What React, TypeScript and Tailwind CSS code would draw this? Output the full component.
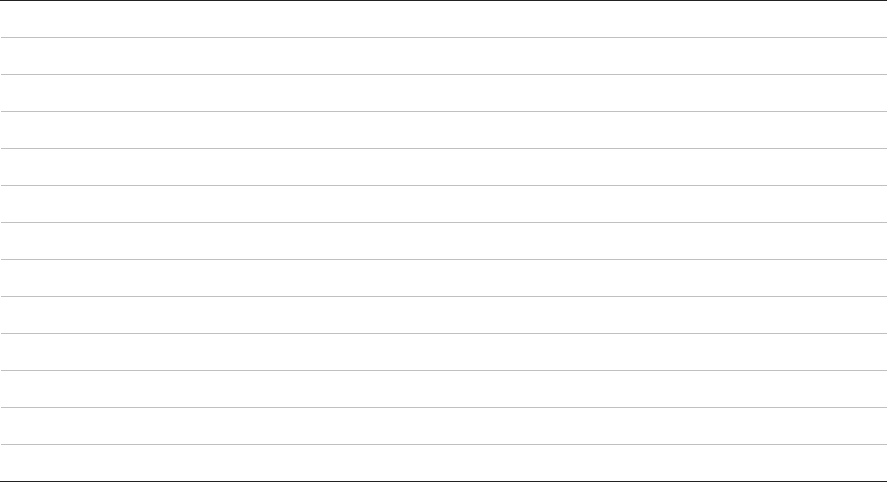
export default function App() {
  const rows = Array.from({ length: 13 }, (_, i) => i);

  return (
    <div className="w-[887px] h-[482px] bg-white border-y border-[#222222]">
      <div className="flex flex-col pl-px">
        {rows.map((r) => (
          <div
            key={r}
            className={
              r === 0 ? "h-9" : "h-[37px] border-t border-[#c0c0c0]"
            }
          />
        ))}
      </div>
    </div>
  );
}
